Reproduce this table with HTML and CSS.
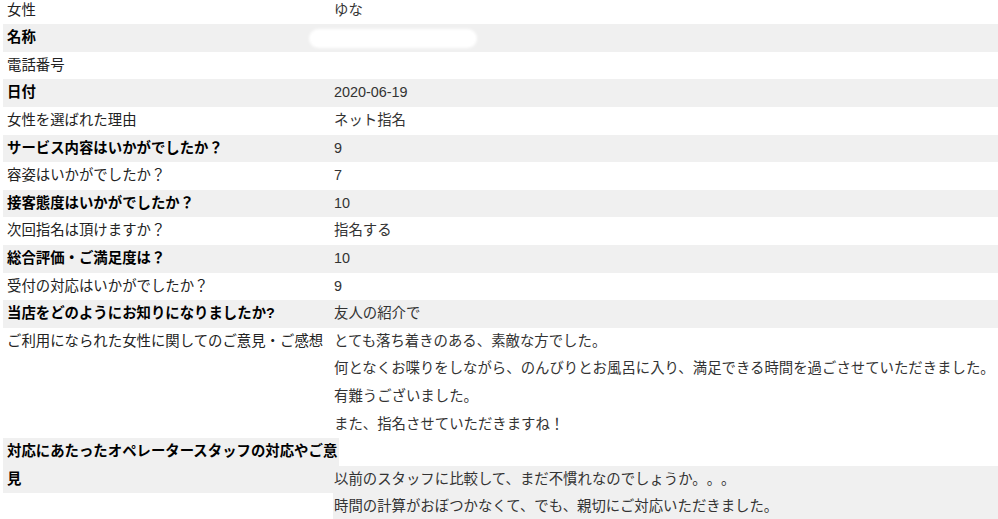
FILE: index.html
```html
<!DOCTYPE html>
<html lang="ja">
<head>
    <meta charset="UTF-8">
    <meta name="viewport" content="width=device-width, initial-scale=1.0">
    <title>アンケート</title>
    <link rel="stylesheet" href="styles.css">
</head>
<body>

    <dl class="survey">
        <div class="row">
            <dt>女性</dt>
            <dd>ゆな</dd>
        </div>
        <div class="row">
            <dt>名称</dt>
            <dd><span class="masked"></span></dd>
        </div>
        <div class="row">
            <dt>電話番号</dt>
            <dd></dd>
        </div>
        <div class="row">
            <dt>日付</dt>
            <dd>2020-06-19</dd>
        </div>
        <div class="row">
            <dt>女性を選ばれた理由</dt>
            <dd>ネット指名</dd>
        </div>
        <div class="row">
            <dt>サービス内容はいかがでしたか？</dt>
            <dd>9</dd>
        </div>
        <div class="row">
            <dt>容姿はいかがでしたか？</dt>
            <dd>7</dd>
        </div>
        <div class="row">
            <dt>接客態度はいかがでしたか？</dt>
            <dd>10</dd>
        </div>
        <div class="row">
            <dt>次回指名は頂けますか？</dt>
            <dd>指名する</dd>
        </div>
        <div class="row">
            <dt>総合評価・ご満足度は？</dt>
            <dd>10</dd>
        </div>
        <div class="row">
            <dt>受付の対応はいかがでしたか？</dt>
            <dd>9</dd>
        </div>
        <div class="row">
            <dt>当店をどのようにお知りになりましたか?</dt>
            <dd>友人の紹介で</dd>
        </div>
        <div class="row">
            <dt>ご利用になられた女性に関してのご意見・ご感想</dt>
            <dd>
                <p>とても落ち着きのある、素敵な方でした。</p>
                <p>何となくお喋りをしながら、のんびりとお風呂に入り、満足できる時間を過ごさせていただきました。</p>
                <p>有難うございました。</p>
                <p>また、指名させていただきますね！</p>
            </dd>
        </div>
        <div class="row split">
            <dt>対応にあたったオペレータースタッフの対応やご意見</dt>
            <dd>
                <p>以前のスタッフに比較して、まだ不慣れなのでしょうか。。。</p>
                <p>時間の計算がおぼつかなくて、でも、親切にご対応いただきました。</p>
            </dd>
        </div>
    </dl>

</body>
</html>
```

FILE: styles.css
```css
body {
    margin: 0;
    padding: 0 0 0 3px;
    background: #fff;
    font-family: "Liberation Sans", "Noto Sans CJK JP", sans-serif;
    font-size: 14.4px;
    line-height: 27.6px;
    color: #333;
    text-spacing-trim: space-all;
}
.survey {
    margin: -3.4px 0 0 0;
}
.row {
    display: grid;
    grid-template-columns: 330px 1fr;
}
.row dt {
    margin: 0;
    padding-left: 4px;
    color: #222;
    white-space: nowrap;
}
.row dd {
    margin: 0;
    padding-left: 1px;
    white-space: nowrap;
    position: relative;
}
.row dd p {
    margin: 0;
}
.row:nth-child(even) dt,
.row:nth-child(even) dd {
    background: #f0f0f0;
}
.row:nth-child(even) dt {
    font-weight: bold;
    color: #000;
}
.row:nth-child(even) dt + dd {
    min-height: 27.6px;
}
.split {
    align-items: start;
}
.split dt {
    white-space: normal;
    margin-right: -6px;
}
.split dd {
    margin-top: 27.6px;
    padding-left: 0;
    z-index: 1;
}
.split dd p {
    padding-left: 1px;
}
.masked {
    position: absolute;
    left: -22px;
    top: 7px;
    width: 164px;
    height: 15px;
    border-radius: 8px;
    background: #fff;
    box-shadow: 0 0 3px 2px #fff;
}
```
